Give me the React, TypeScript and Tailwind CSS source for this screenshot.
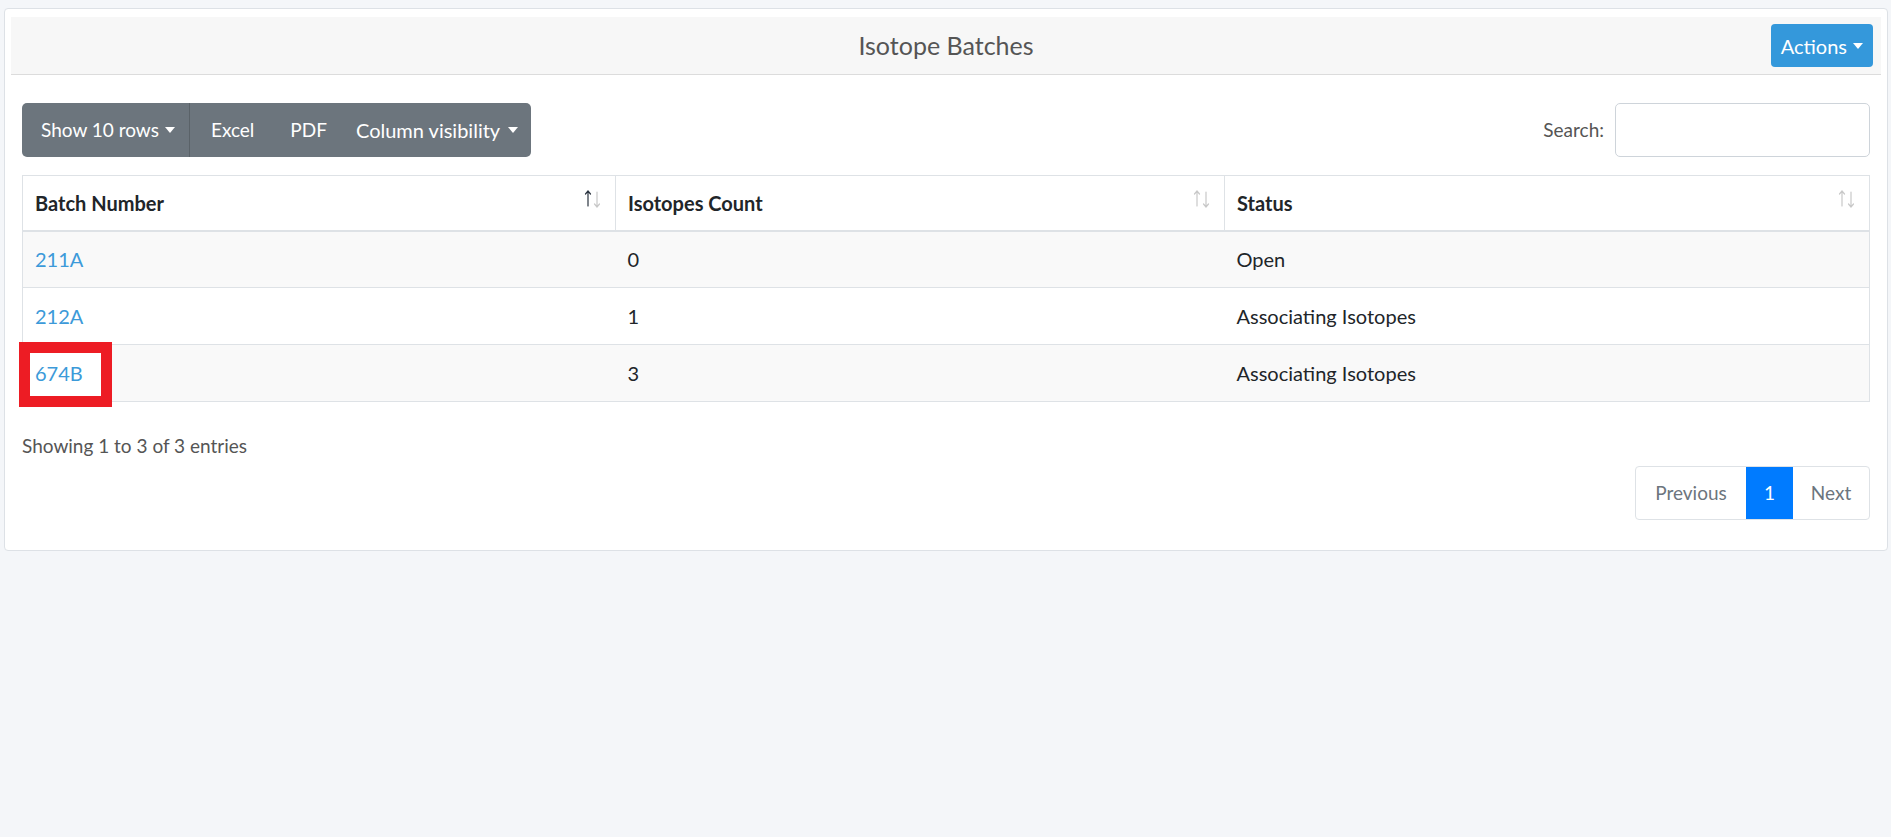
import React from "react";

const rows = [
  { batch: "211A", count: 0, status: "Open" },
  { batch: "212A", count: 1, status: "Associating Isotopes" },
  { batch: "674B", count: 3, status: "Associating Isotopes" },
];

const Caret = ({ gap = "ml-[6px]" }: { gap?: string }) => (
  <svg width="10" height="6" viewBox="0 0 10 6" className={`${gap} inline-block`}>
    <path d="M0 0 L10 0 L5 6 Z" fill="currentColor" />
  </svg>
);

const SortIcon = ({ active }: { active?: boolean }) => (
  <svg width="18" height="20" viewBox="0 0 18 20" className="absolute right-[13px] top-[13px]">
    <g fill="none" strokeWidth="1.2" strokeLinecap="round">
      <path d="M4 2 V17 M1.5 5 L4 2 L6.5 5" stroke={active ? "#2b3440" : "#c8c8c8"} />
      <path d="M13 3 V18 M10.5 15 L13 18 L15.5 15" stroke="#c8c8c8" />
    </g>
  </svg>
);

export default function App() {
  return (
    <div
      className="min-h-screen bg-[#f4f6f9] pt-2 pl-1 pr-[3px]"
      style={{ fontFamily: "Lato, 'Open Sans', sans-serif" }}
    >
      <div className="bg-white border border-[#dde1e6] rounded px-[6px] pt-[8px] pb-[30px]">
        {/* Card header */}
        <div className="grid grid-cols-[1fr_auto_1fr] items-center h-[58px] bg-[#f7f7f7] border-b border-[#dcdcdc]">
          <div />
          <h3 className="text-[25px] text-[#555] leading-none">Isotope Batches</h3>
          <div className="flex justify-end pr-2">
            <button className="flex items-center h-[43px] px-[10px] bg-[#3498db] text-white text-[20px] rounded-[4px]">
              Actions
              <Caret />
            </button>
          </div>
        </div>

        <div className="pl-[11px] pr-[11px] pt-[28px]">
          {/* Toolbar */}
          <div className="flex items-center justify-between">
            <div className="flex h-[54px] bg-[#6c757d] text-white text-[19px] rounded-[5px]">
              <button className="flex items-center pl-[19px] pr-[14px] border-r border-[#5a6268]">
                Show 10 rows
                <Caret />
              </button>
              <button className="pl-[21px] pr-[20px]">Excel</button>
              <button className="pl-[16px] pr-[17px]">PDF</button>
              <button className="flex items-center pl-[12px] pr-[13px] text-[20px]">
                Column visibility
                <Caret gap="ml-[8px]" />
              </button>
            </div>
            <label className="flex items-center gap-[11px] text-[19px] text-[#555]">
              Search:
              <input className="w-[255px] h-[54px] border border-[#ced4da] rounded-[5px] px-3 outline-none" />
            </label>
          </div>

          {/* Table */}
          <table className="mt-[18px] w-full border-collapse border border-[#dee2e6] text-[20px] text-[#212529]">
            <thead>
              <tr className="h-[55px] border-b-2 border-[#dee2e6]">
                <th className="relative w-[593px] border-r border-[#dee2e6] px-3 text-left font-bold">
                  Batch Number
                  <SortIcon active />
                </th>
                <th className="relative w-[609px] border-r border-[#dee2e6] px-3 text-left font-bold">
                  Isotopes Count
                  <SortIcon />
                </th>
                <th className="relative px-3 text-left font-bold">
                  Status
                  <SortIcon />
                </th>
              </tr>
            </thead>
            <tbody>
              {rows.map((r, i) => (
                <tr
                  key={r.batch}
                  className={`h-[57px] border-t border-[#dee2e6] ${i % 2 === 0 ? "bg-[#f9f9f9]" : "bg-white"}`}
                >
                  <td className="relative px-3">
                    {i === 2 && (
                      <div className="absolute left-[-4px] top-[-3px] w-[93px] h-[65px] border-[11px] border-[#ed1c24] bg-white" />
                    )}
                    <a href="#" className="relative text-[#3c9ad9]">
                      {r.batch}
                    </a>
                  </td>
                  <td className="px-3">{r.count}</td>
                  <td className="px-3">{r.status}</td>
                </tr>
              ))}
            </tbody>
          </table>

          {/* Footer */}
          <div className="mt-[29px] text-[19px] leading-[30px] text-[#555]">Showing 1 to 3 of 3 entries</div>
          <div className="mt-[5px] flex justify-end">
            <div className="flex h-[54px] text-[19px] text-[#6c757d] border border-[#dee2e6] rounded-[4px]">
              <span className="flex items-center px-[15px] w-[110px] justify-center">Previous</span>
              <span className="flex items-center justify-center w-[47px] bg-[#007bff] text-white">1</span>
              <span className="flex items-center justify-center w-[76px]">Next</span>
            </div>
          </div>
        </div>
      </div>
    </div>
  );
}
